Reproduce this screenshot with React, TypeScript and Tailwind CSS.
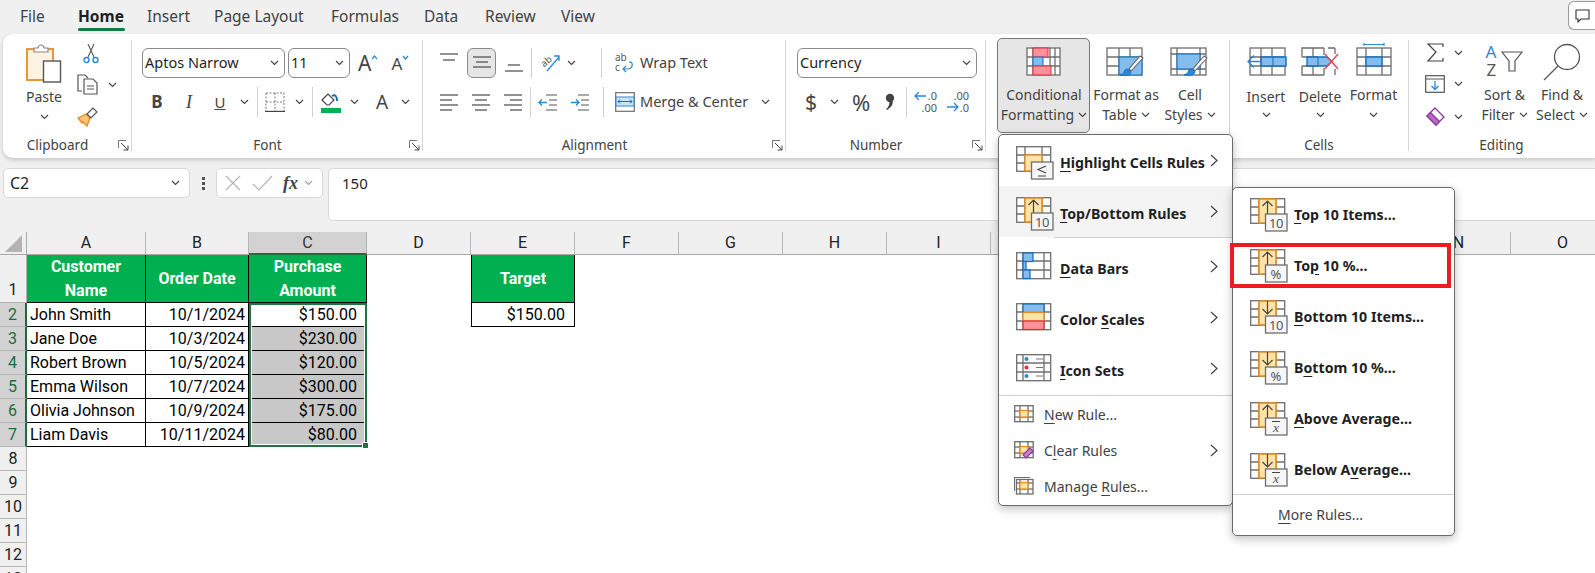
import React from "react";

const UI = "font-['Noto_Sans',sans-serif]";
const GRAY = "#6e6e6e";
const BLUE = "#0f6cbd";
const LBLUE = "#83bdee";

function Chev({ className = "" }: { className?: string }) {
  return (
    <svg width="9" height="6" viewBox="0 0 9 6" className={className}>
      <path d="M1 1l3.5 3.5L8 1" fill="none" stroke="#424242" strokeWidth="1.1" />
    </svg>
  );
}

function Launcher() {
  return (
    <svg width="11" height="11" viewBox="0 0 11 11" className="mr-[2px]">
      <path d="M.5 8V.5H8" fill="none" stroke="#777" />
      <path d="M3 3l7 7M10 5.5V10H5.5" fill="none" stroke="#444" />
    </svg>
  );
}

function Group({ label, launcher, className, children }: { label?: string; launcher?: boolean; className: string; children: React.ReactNode }) {
  return (
    <div className={`flex h-[111px] flex-col border-r border-[#d6d6d6] ${className}`}>
      <div className="h-[99px]">{children}</div>
      <div className="flex h-[12px] items-center text-[13.5px] text-[#424242]">
        <div className="flex-1 text-center">{label}</div>
        {launcher && (
          <div className="flex w-[19px] justify-end">
            <Launcher />
          </div>
        )}
      </div>
    </div>
  );
}

function Large({ icon, a, b, chevInline, className = "", low }: { icon: React.ReactNode; a: string; b?: string; chevInline?: boolean; className?: string; low?: boolean }) {
  return (
    <div className={`flex flex-col items-center text-[14px] leading-[20px] text-[#424242] ${className}`}>
      <div className="flex h-[36px] items-end">{icon}</div>
      <div className={`whitespace-nowrap ${low ? "mt-[11px]" : "mt-[9px]"}`}>{a}</div>
      {b ? (
        <div className="flex items-center gap-[4px] whitespace-nowrap">
          {b}
          {chevInline && <Chev />}
        </div>
      ) : (
        <Chev className={low ? "mt-[5px]" : "mt-[7px]"} />
      )}
    </div>
  );
}

function Select({ value, className }: { value: string; className: string }) {
  return (
    <div className={`flex h-[30px] items-center justify-between rounded-[6px] border border-[#8a8a8a] bg-white pl-[2px] pr-[5px] text-[14.5px] text-[#1f1f1f] ${className}`}>
      <span>{value}</span>
      <Chev />
    </div>
  );
}

function Sep({ className = "" }: { className?: string }) {
  return <div className={`h-[30px] w-px bg-[#d0d0d0] ${className}`} />;
}

function Lines({ rows }: { rows: number[][] }) {
  return (
    <svg width="20" height="20" viewBox="0 0 20 20">
      {rows.map((r, i) => (
        <path key={i} d={`M${r[0]} ${r[2]}H${r[1]}`} stroke="#555" strokeWidth="1.3" />
      ))}
    </svg>
  );
}

const grid = (x: number, y: number, w: number, h: number, xs: number[], ys: number[]) => (
  <g fill="none" stroke={GRAY} strokeWidth="1.3">
    <rect x={x} y={y} width={w} height={h} fill="#fff" />
    {xs.map((v) => (
      <path key={"x" + v} d={`M${v} ${y}V${y + h}`} />
    ))}
    {ys.map((v) => (
      <path key={"y" + v} d={`M${x} ${v}H${x + w}`} />
    ))}
  </g>
);

function PasteIcon() {
  return (
    <svg width="36" height="40" viewBox="0 0 36 40">
      <rect x="1" y="6" width="26" height="31" fill="#fdf3e3" stroke="#e8983a" strokeWidth="2" />
      <path d="M8 9V5h4a3 3 0 016 0h4v4z" fill="#fff" stroke="#888" strokeWidth="1.2" />
      <rect x="17.5" y="18" width="17" height="21" fill="#fff" stroke="#555" strokeWidth="1.4" />
    </svg>
  );
}

function CutIcon() {
  return (
    <svg width="16" height="21" viewBox="0 0 16 21">
      <path d="M5 14L11 1M11 14L5 1" stroke="#555" strokeWidth="1.1" fill="none" />
      <circle cx="3.5" cy="17" r="2.5" fill="none" stroke="#2b88d8" strokeWidth="1.4" />
      <circle cx="12.5" cy="17" r="2.5" fill="none" stroke="#2b88d8" strokeWidth="1.4" />
    </svg>
  );
}

function CopyIcon() {
  return (
    <svg width="22" height="21" viewBox="0 0 22 21">
      <path d="M5 17H1V1h7l3 3" fill="#fff" stroke="#555" strokeWidth="1.2" />
      <path d="M7 5h9l4 4v11H7z" fill="#fff" stroke="#555" strokeWidth="1.2" />
      <path d="M10 12h7M10 15h7" stroke="#555" />
    </svg>
  );
}

function PainterIcon() {
  return (
    <svg width="21" height="20" viewBox="0 0 21 20">
      <path d="M1 11l8-4 4 4-3 8-4-4-1 1z" fill="#f9c27d" stroke="#e8891e" strokeWidth="1.3" />
      <path d="M10 7l6-6 4 4-6 6z" fill="#fff" stroke="#555" strokeWidth="1.2" />
    </svg>
  );
}

function CFIcon() {
  return (
    <svg width="36" height="29" viewBox="0 0 36 29">
      {grid(1, 1, 33, 27, [7, 24, 29], [10, 19])}
      <rect x="7" y="1" width="15" height="9" fill="#ff8f98" stroke="#d13438" />
      <rect x="7" y="10" width="10" height="9" fill={LBLUE} stroke={BLUE} />
      <rect x="7" y="19" width="18" height="9" fill="#ff8f98" stroke="#d13438" />
    </svg>
  );
}

function Brush() {
  return (
    <g>
      <path d="M37 11L25 24l-2-2 11-13z" fill="#fff" stroke="#666" strokeWidth="1.1" />
      <path d="M22 22c-3 0-4 2-4 3s-2 2-4 3c4 1 10 1 11-3z" fill="#2b88d8" stroke={BLUE} strokeWidth=".8" />
    </g>
  );
}

function TableIcon() {
  return (
    <svg width="40" height="31" viewBox="0 0 40 31" className="-mb-[2px]">
      {grid(1, 1, 35, 27, [13, 24], [10, 19])}
      <rect x="13" y="10" width="23" height="18" fill={LBLUE} stroke={BLUE} />
      <Brush />
    </svg>
  );
}

function StylesIcon() {
  return (
    <svg width="40" height="31" viewBox="0 0 40 31" className="-mb-[2px]">
      {grid(1, 1, 35, 27, [7, 30], [7, 22])}
      <rect x="7" y="7" width="23" height="15" fill={LBLUE} stroke={BLUE} />
      <Brush />
    </svg>
  );
}

function InsertIcon() {
  return (
    <svg width="41" height="29" viewBox="0 0 41 29">
      {grid(4, 1, 35, 27, [15, 26], [10, 19])}
      <rect x="15" y="10" width="25" height="9" fill={LBLUE} stroke={BLUE} strokeWidth="1.4" />
      <path d="M27 10v9" stroke={BLUE} />
      <path d="M15 14.5H2M8 8.5l-6 6 6 6" fill="none" stroke="#2b88d8" strokeWidth="1.4" />
    </svg>
  );
}

function DeleteIcon() {
  return (
    <svg width="38" height="29" viewBox="0 0 38 29">
      <path d="M23 1H1v9M1 19v9h22M34 28v-6M34 1v6M27 1h7" fill="none" stroke={GRAY} strokeWidth="1.3" />
      <path d="M1 10h16M1 19h16M12 1v9M12 19v9M23 1v7M23 21v7" stroke={GRAY} strokeWidth="1.3" />
      <path d="M6 10h20l5 4.5-5 4.5H6z" fill={LBLUE} stroke={BLUE} strokeWidth="1.3" />
      <path d="M17 10v9" stroke={BLUE} />
      <path d="M24 7l13 15M37 7L24 22" stroke="#e8484f" strokeWidth="1.4" />
    </svg>
  );
}

function FormatIcon() {
  return (
    <svg width="36" height="33" viewBox="0 0 36 33">
      <path d="M8 1.5h20M8 0v3M28 0v3" stroke="#2b88d8" strokeWidth="1.2" />
      {grid(1, 5, 34, 27, [10, 26], [14, 23])}
      <rect x="10" y="14" width="16" height="9" fill={LBLUE} stroke={BLUE} strokeWidth="1.3" />
    </svg>
  );
}

function SortIcon() {
  return (
    <div className="relative -mb-[3px] h-[36px] w-[38px] text-[17px] leading-[18px]">
      <span className="absolute left-[0px] top-0 text-[#2b88d8]">A</span>
      <span className="absolute left-[1px] top-[18px] text-[#555]">Z</span>
      <svg width="22" height="22" viewBox="0 0 22 22" className="absolute left-[15px] top-[8px]">
        <path d="M1 1h20l-7 9v10H8V10z" fill="#fff" stroke="#555" strokeWidth="1.2" />
      </svg>
    </div>
  );
}

function FindIcon() {
  return (
    <svg width="38" height="38" viewBox="0 0 38 38" className="-mb-[5px]">
      <circle cx="24" cy="14" r="12.5" fill="#fff" stroke="#555" strokeWidth="1.3" />
      <path d="M15 23L1 37" stroke="#555" strokeWidth="1.3" />
    </svg>
  );
}

function FillBucket() {
  return (
    <svg width="22" height="22" viewBox="0 0 22 22">
      <path d="M2 9l6-6 6 6-5 5H7z" fill="#fff" stroke="#444" strokeWidth="1.2" />
      <path d="M12 5c3-2 5 0 5 5" fill="none" stroke="#0f6cbd" strokeWidth="1.8" />
      <rect x="1" y="17" width="20" height="5" fill="#00b050" />
    </svg>
  );
}

function DecimalIcon({ more }: { more?: boolean }) {
  return (
    <svg width="28" height="26" viewBox="0 0 28 26">
      <text x="26" y="11" textAnchor="end" fontSize="11" fill="#555" fontFamily="Noto Sans, sans-serif">
        {more ? ".00" : ".0"}
      </text>
      <text x="26" y="23" textAnchor="end" fontSize="11" fill="#555" fontFamily="Noto Sans, sans-serif">
        {more ? ".0" : ".00"}
      </text>
      {more ? (
        <path d="M4 18h11M11 14l4 4-4 4" fill="none" stroke="#2b88d8" strokeWidth="1.3" />
      ) : (
        <path d="M15 7H4M8 3L4 7l4 4" fill="none" stroke="#2b88d8" strokeWidth="1.3" />
      )}
    </svg>
  );
}

function RuleIcon({ kind, badge }: { kind: "cell" | "up" | "down"; badge: React.ReactNode }) {
  return (
    <svg width="38" height="34" viewBox="0 0 38 34" className="shrink-0">
      {grid(0.7, 0.7, 34, 24.6, [9, 26], [9, 17])}
      {kind === "cell" ? (
        <rect x="9" y="9" width="17" height="16" fill="#fde3a7" stroke="#e58a1f" strokeWidth="1.3" />
      ) : (
        <rect x="9" y="1" width="17" height="24" fill="#fde3a7" stroke="#e58a1f" strokeWidth="1.5" />
      )}
      {kind === "up" && <path d="M17.5 19V3M12.5 8l5-5 5 5" fill="none" stroke="#444" strokeWidth="1.2" />}
      {kind === "down" && <path d="M17.5 1v13M12.5 9l5 5 5-5" fill="none" stroke="#444" strokeWidth="1.2" />}
      <rect x="15.5" y="16" width="21.5" height="17" fill="#f6f6f6" stroke={GRAY} strokeWidth="1.3" />
      {badge}
    </svg>
  );
}

const ten = (
  <text x="26" y="29.5" textAnchor="middle" fontSize="13" fontWeight="400" fill="#555" fontFamily="Noto Sans, sans-serif" letterSpacing="-.5">
    10
  </text>
);
const pct = (
  <text x="26" y="29.5" textAnchor="middle" fontSize="13" fontWeight="400" fill="#555" fontFamily="Noto Sans, sans-serif">
    %
  </text>
);
const lte = <path d="M30 20l-8 3.5 8 3.5M22 30h8" fill="none" stroke="#444" strokeWidth="1.1" />;
const avg = (
  <g>
    <path d="M22 19.5h8" stroke="#444" />
    <text x="26" y="29.5" textAnchor="middle" fontSize="13.5" fontWeight="400" fill="#555" fontStyle="italic" fontFamily="Liberation Serif, serif">
      x
    </text>
  </g>
);

function DataBarsIcon() {
  return (
    <svg width="38" height="34" viewBox="0 0 38 34">
      {grid(0.7, 0.7, 34, 26, [7, 28], [9, 18])}
      <rect x="7" y="1" width="10" height="8.5" fill={LBLUE} stroke={BLUE} strokeWidth="1.2" />
      <rect x="7" y="9.5" width="3" height="8.5" fill={LBLUE} stroke={BLUE} strokeWidth="1.2" />
      <rect x="7" y="18" width="7" height="8.5" fill={LBLUE} stroke={BLUE} strokeWidth="1.2" />
    </svg>
  );
}

function ScalesIcon() {
  return (
    <svg width="38" height="34" viewBox="0 0 38 34">
      {grid(0.7, 0.7, 34, 26, [7, 28], [9, 18])}
      <rect x="7" y="1" width="21" height="8.5" fill={LBLUE} stroke={BLUE} strokeWidth="1.2" />
      <rect x="7" y="9.5" width="21" height="8.5" fill="#fde3a7" stroke="#e58a1f" strokeWidth="1.2" />
      <rect x="7" y="18" width="21" height="8.5" fill="#ff8f98" stroke="#d13438" strokeWidth="1.2" />
    </svg>
  );
}

function IconSetsIcon() {
  return (
    <svg width="38" height="34" viewBox="0 0 38 34">
      {grid(0.7, 0.7, 34, 26, [7, 28], [9, 18])}
      <circle cx="10.5" cy="5" r="2" fill="#2b88d8" />
      <circle cx="10.5" cy="13.5" r="2" fill="#e8303a" />
      <circle cx="10.5" cy="22" r="2" fill="#2b88d8" />
      <path d="M20 5h7M20 13.5h7M20 22h7" stroke="#777" strokeWidth="1.2" />
    </svg>
  );
}

function SmallGrid({ extra, stacked }: { extra?: React.ReactNode; stacked?: boolean }) {
  return (
    <svg width="20" height="18" viewBox="0 0 20 18" className="shrink-0">
      {stacked && <path d="M.5 14V.5H16" fill="none" stroke={GRAY} strokeWidth="1.2" />}
      {grid(stacked ? 2.5 : 0.7, stacked ? 2.5 : 0.7, stacked ? 16.5 : 18.5, stacked ? 14.5 : 16, [6, 14], [6, 12])}
      <rect x="6" y="5.5" width="8" height="6.5" fill="#fde3a7" stroke="#e58a1f" strokeWidth="1.2" />
      {extra}
    </svg>
  );
}

function Arrow() {
  return (
    <svg width="8" height="13" viewBox="0 0 8 13" className="shrink-0">
      <path d="M1 1l6 5.5L1 12" fill="none" stroke="#424242" strokeWidth="1.2" />
    </svg>
  );
}

function U({ children }: { children: React.ReactNode }) {
  return <span className="underline underline-offset-[3px]">{children}</span>;
}

function MenuRow({ icon, children, arrow, className = "", shift = "", arrowShift = "" }: { icon: React.ReactNode; children: React.ReactNode; arrow?: boolean; className?: string; shift?: string; arrowShift?: string }) {
  return (
    <div className={`flex h-[51px] items-center pl-[17px] text-[14.2px] font-bold text-[#1f1f1f] ${className}`}>
      <div className={`w-[44px] ${shift}`}>{icon}</div>
      <div className={`whitespace-nowrap ${shift}`}>{children}</div>
      {arrow && (
        <div className={`ml-auto mr-[14px] ${arrowShift}`}>
          <Arrow />
        </div>
      )}
    </div>
  );
}

function PlainRow({ icon, children, arrow }: { icon: React.ReactNode; children: React.ReactNode; arrow?: boolean }) {
  return (
    <div className="flex h-[36px] items-center pl-[15px] text-[14px] text-[#424242]">
      <div className="w-[30px]">{icon}</div>
      <div className="whitespace-nowrap">{children}</div>
      {arrow && (
        <div className="ml-auto mr-[14px]">
          <Arrow />
        </div>
      )}
    </div>
  );
}

const cols = ["A", "B", "C", "D", "E", "F", "G", "H", "I", "J", "K", "L", "M", "N", "O"];
const rows = [
  ["John Smith", "10/1/2024", "$150.00"],
  ["Jane Doe", "10/3/2024", "$230.00"],
  ["Robert Brown", "10/5/2024", "$120.00"],
  ["Emma Wilson", "10/7/2024", "$300.00"],
  ["Olivia Johnson", "10/9/2024", "$175.00"],
  ["Liam Davis", "10/11/2024", "$80.00"],
];

function Sheet() {
  const green = "flex items-center justify-center border-b border-r border-black bg-[#00b050] text-center font-bold leading-[24px] text-white";
  return (
    <div className="relative grid shrink-0 grid-cols-[27px_119px_103px_118px_104px_104px_repeat(10,104px)] grid-rows-[23px_48px_repeat(12,24px)] whitespace-nowrap bg-white font-['Roboto',sans-serif] text-[16px] text-black">
      <div className="flex items-end justify-end border-r border-b border-[#a8a8a8] bg-[#f0f0f0] pb-[2px] pr-[4px]">
        <div className="h-0 w-0 border-b-[17px] border-l-[17px] border-b-[#b4b4b4] border-l-transparent" />
      </div>
      {cols.map((c) => (
        <div
          key={c}
          className={
            c === "C"
              ? "flex items-center justify-center border-b-2 border-r border-[#1e6b41] border-r-[#b0b0b0] bg-[#d2d2d2] text-[#333]"
              : "flex items-center justify-center border-b border-r border-[#b8b8b8] border-b-[#a8a8a8] bg-[#f0f0f0] text-[#222]"
          }
        >
          {c}
        </div>
      ))}

      <div className="flex items-end justify-center border-b border-r border-[#b0b0b0] bg-[#f0f0f0] text-[#222]">1</div>
      <div className={green}>
        Customer
        <br />
        Name
      </div>
      <div className={green}>Order Date</div>
      <div className={green}>
        Purchase
        <br />
        Amount
      </div>
      <div />
      <div className={`${green} border-l`}>Target</div>
      <div className="col-span-10" />

      {rows.map((r, i) => (
        <React.Fragment key={r[0]}>
          <div className="flex items-center justify-center border-b border-r-2 border-[#b8b8b8] border-r-[#1e6b41] bg-[#d2d2d2] text-[#1e6b41]">{i + 2}</div>
          <div className="flex items-center border-b border-r border-black pl-[3px]">{r[0]}</div>
          <div className="flex items-center justify-end border-b border-r border-black pr-[3px]">{r[1]}</div>
          <div className={`flex items-center justify-end border-b border-r border-black pr-[9px] ${i === 0 ? "bg-white" : "bg-[#c8c8c8]"}`}>{r[2]}</div>
          <div />
          {i === 0 ? <div className="flex items-center justify-end border-b border-r border-l border-black pr-[9px]">$150.00</div> : <div />}
          <div className="col-span-10" />
        </React.Fragment>
      ))}
      {[8, 9, 10, 11, 12, 13].map((n) => (
        <React.Fragment key={n}>
          <div className="flex items-center justify-center border-b border-r border-[#b8b8b8] bg-[#f0f0f0] text-[#222]">{n}</div>
          <div className="col-span-15" />
        </React.Fragment>
      ))}

      {/* selected range C2:C7 */}
      <div className="pointer-events-none absolute inset-0 col-start-4 col-end-5 row-start-3 row-end-9 border-2 border-[#217346] shadow-[inset_0_0_0_1px_#fff]">
        <div className="absolute -bottom-[4px] -right-[4px] h-[7px] w-[7px] border border-white bg-[#217346]" />
      </div>
    </div>
  );
}

function CFMenu() {
  return (
    <div className="absolute left-[998px] top-[134px] z-20 h-[372px] w-[235px] rounded-[5px] border border-[#6a6a6a] bg-white shadow-[0_3px_10px_rgba(0,0,0,0.25)]">
      <MenuRow icon={<RuleIcon kind="cell" badge={lte} />} arrow shift="pt-[5px]">
        <U>H</U>ighlight Cells Rules
      </MenuRow>
      <MenuRow icon={<RuleIcon kind="up" badge={ten} />} arrow shift="pt-[5px]" className="bg-[#f3f3f3]">
        <U>T</U>op/Bottom Rules
      </MenuRow>
      <div className="ml-[55px] h-px bg-[#d0d0d0]" />
      <MenuRow icon={<DataBarsIcon />} arrow shift="pt-[11px]" arrowShift="pt-[5px]">
        <U>D</U>ata Bars
      </MenuRow>
      <MenuRow icon={<ScalesIcon />} arrow shift="pt-[11px]" arrowShift="pt-[5px]">
        Color <U>S</U>cales
      </MenuRow>
      <MenuRow icon={<IconSetsIcon />} arrow shift="pt-[11px]" arrowShift="pt-[5px]">
        <U>I</U>con Sets
      </MenuRow>
      <div className="mt-[4px] h-px bg-[#d0d0d0]" />
      <PlainRow icon={<SmallGrid />}>
        <U>N</U>ew Rule...
      </PlainRow>
      <PlainRow
        arrow
        icon={
          <SmallGrid
            extra={<path d="M9 14l7-7 3 3-7 7z" fill="#c77fd0" stroke="#8e3a9d" strokeWidth="1.2" />}
          />
        }
      >
        C<U>l</U>ear Rules
      </PlainRow>
      <PlainRow icon={<SmallGrid stacked />}>
        Manage <U>R</U>ules...
      </PlainRow>
    </div>
  );
}

function TopMenu() {
  return (
    <div className="absolute left-[1232px] top-[187px] z-30 h-[349px] w-[223px] rounded-[5px] border border-[#6a6a6a] bg-white shadow-[0_3px_10px_rgba(0,0,0,0.25)]">
      <MenuRow icon={<RuleIcon kind="up" badge={ten} />} shift="pt-[2px]">
        <U>T</U>op 10 Items...
      </MenuRow>
      <MenuRow icon={<RuleIcon kind="up" badge={pct} />} shift="pt-[2px]">
        To<U>p</U> 10 %...
      </MenuRow>
      <MenuRow icon={<RuleIcon kind="down" badge={ten} />} shift="pt-[2px]">
        <U>B</U>ottom 10 Items...
      </MenuRow>
      <MenuRow icon={<RuleIcon kind="down" badge={pct} />} shift="pt-[2px]">
        B<U>o</U>ttom 10 %...
      </MenuRow>
      <MenuRow icon={<RuleIcon kind="up" badge={avg} />} shift="pt-[2px]">
        <U>A</U>bove Average...
      </MenuRow>
      <MenuRow icon={<RuleIcon kind="down" badge={avg} />} shift="pt-[2px]">
        Below A<U>v</U>erage...
      </MenuRow>
      <div className="h-px bg-[#d0d0d0]" />
      <div className="flex h-[38px] items-center pl-[45px] text-[14px] text-[#424242]">
        <span>
          <U>M</U>ore Rules...
        </span>
      </div>
      {/* red callout on Top 10 % */}
      <div className="absolute left-[-3px] top-[55px] h-[45px] w-[221px] border-[4px] border-[#ed1c24]" />
    </div>
  );
}

export default function App() {
  return (
    <div className={`relative flex h-[573px] w-[1595px] flex-col overflow-hidden bg-[#f0f0f0] ${UI}`}>
      {/* tabs */}
      <div className="flex h-[34px] shrink-0 text-[15.5px] text-[#424242]">
        <div className="w-[78px] pl-[20px] pt-[5px]">File</div>
        <div className="flex w-[69px] flex-col pt-[5px]">
          <span className="font-bold text-[#1f1f1f]">Home</span>
          <div className="h-[3px] w-[47px] rounded-sm bg-[#107c41]" />
        </div>
        <div className="w-[67px] pt-[5px]">Insert</div>
        <div className="w-[117px] pt-[5px]">Page Layout</div>
        <div className="w-[93px] pt-[5px]">Formulas</div>
        <div className="w-[61px] pt-[5px]">Data</div>
        <div className="w-[76px] pt-[5px]">Review</div>
        <div className="pt-[5px]">View</div>
        <div className="ml-auto mt-[1px] flex h-[29px] w-[27px] items-center justify-center rounded-l-[6px] border border-r-0 border-[#9a9a9a] bg-white">
          <svg width="15" height="14" viewBox="0 0 15 14">
            <path d="M1 1h13v9H6l-3 3v-3H1z" fill="none" stroke="#333" strokeWidth="1.1" />
          </svg>
        </div>
      </div>

      {/* ribbon */}
      <div className="ml-[3px] flex h-[124px] shrink-0 rounded-l-[10px] bg-white pt-[6px] shadow-[0_2px_4px_rgba(0,0,0,0.18)]">
        <Group label="Clipboard" launcher className="w-[129px]">
          <div className="flex">
            <div className="ml-[19px] flex w-[44px] flex-col items-center text-[14px] leading-[20px] text-[#424242]">
              <div className="mt-[3px]">
                <PasteIcon />
              </div>
              <div className="mt-[4px]">Paste</div>
              <Chev className="mt-[7px]" />
            </div>
            <div className="ml-[11px] flex flex-col">
              <div className="ml-[6px] mt-[3px]">
                <CutIcon />
              </div>
              <div className="mt-[10px] flex items-center gap-[9px]">
                <CopyIcon />
                <Chev />
              </div>
              <div className="mt-[12px]">
                <PainterIcon />
              </div>
            </div>
          </div>
        </Group>

        <Group label="Font" launcher className="w-[291px]">
          <div className="ml-[10px] mt-[8px] flex items-center">
            <Select value="Aptos Narrow" className="w-[143px]" />
            <Select value="11" className="ml-[3px] w-[62px]" />
            <span className="ml-[8px] text-[21px] leading-none text-[#444]">A</span>
            <svg width="7" height="5" viewBox="0 0 7 5" className="mb-[12px]">
              <path d="M1 4l2.5-3L6 4" fill="none" stroke="#2b88d8" strokeWidth="1.2" />
            </svg>
            <span className="ml-[13px] text-[17px] leading-none text-[#444]">A</span>
            <svg width="7" height="5" viewBox="0 0 7 5" className="mb-[12px]">
              <path d="M1 1l2.5 3L6 1" fill="none" stroke="#2b88d8" strokeWidth="1.4" />
            </svg>
          </div>
          <div className="ml-[9px] mt-[9px] flex h-[30px] items-center text-[#444]">
            <span className="w-[32px] text-center text-[17px] font-bold">B</span>
            <span className="w-[32px] text-center font-['Liberation_Serif',serif] text-[18px] italic">I</span>
            <span className="w-[30px] text-center text-[15px] underline">U</span>
            <Chev className="ml-[5px]" />
            <Sep className="ml-[8px]" />
            <svg width="20" height="20" viewBox="0 0 20 20" className="ml-[7px]">
              <path d="M1 1h18v18M1 1v18M10 1v18M1 10h18" fill="none" stroke="#777" strokeDasharray="2 1.5" />
              <path d="M0 19.5h20" stroke="#444" strokeWidth="1.4" />
            </svg>
            <Chev className="ml-[10px]" />
            <Sep className="ml-[8px]" />
            <div className="ml-[7px]">
              <FillBucket />
            </div>
            <Chev className="ml-[8px]" />
            <span className="ml-[17px] text-[19px] leading-none">A</span>
            <Chev className="ml-[13px]" />
          </div>
        </Group>

        <Group label="Alignment" launcher className="w-[363px]">
          <div className="ml-[16px] mt-[8px] flex h-[30px] items-center">
            <Lines rows={[[1, 19, 1], [4, 16, 7]]} />
            <div className="ml-[8px] flex h-[30px] w-[29px] items-center justify-center rounded-[6px] border border-[#8a8a8a] bg-[#e6e6e6]">
              <Lines rows={[[1, 19, 4], [4, 16, 9], [1, 19, 14]]} />
            </div>
            <div className="ml-[8px]">
              <Lines rows={[[4, 16, 12], [1, 19, 18]]} />
            </div>
            <Sep className="ml-[7px]" />
            <svg width="24" height="24" viewBox="0 0 24 24" className="ml-[6px]">
              <text x="3" y="14" fontSize="9.5" fill="#555" transform="rotate(-40 8 11)" fontFamily="Noto Sans, sans-serif">
                ab
              </text>
              <path d="M9 20L21 6M16 5h5v5" fill="none" stroke="#2b88d8" strokeWidth="1.3" />
            </svg>
            <Chev className="ml-[5px]" />
            <Sep className="ml-[25px]" />
            <svg width="20" height="24" viewBox="0 0 20 24" className="ml-[13px]">
              <text x="0" y="10" fontSize="10" fill="#555" fontFamily="Noto Sans, sans-serif">
                ab
              </text>
              <text x="0" y="20" fontSize="10" fill="#555" fontFamily="Noto Sans, sans-serif">
                c
              </text>
              <path d="M14 11c4-1 5 6-1 7H8M11 15l-3 3 3 3" fill="none" stroke="#2b88d8" strokeWidth="1.2" />
            </svg>
            <span className="ml-[5px] whitespace-nowrap text-[14.5px] text-[#424242]">Wrap Text</span>
          </div>
          <div className="ml-[16px] mt-[9px] flex h-[30px] items-center">
            <Lines rows={[[1, 19, 3], [1, 13, 8], [1, 19, 13], [1, 13, 18]]} />
            <div className="ml-[12px]">
              <Lines rows={[[1, 19, 3], [4, 16, 8], [1, 19, 13], [4, 16, 18]]} />
            </div>
            <div className="ml-[12px]">
              <Lines rows={[[1, 19, 3], [7, 19, 8], [1, 19, 13], [7, 19, 18]]} />
            </div>
            <Sep className="ml-[7px]" />
            <svg width="20" height="20" viewBox="0 0 20 20" className="ml-[7px]">
              <path d="M8 3h11M11 8h8M11 13h8M8 18h11" stroke="#555" strokeWidth="1.2" />
              <path d="M9 10.5H1M4 7.5l-3 3 3 3" fill="none" stroke="#2b88d8" strokeWidth="1.3" />
            </svg>
            <svg width="20" height="20" viewBox="0 0 20 20" className="ml-[12px]">
              <path d="M8 3h11M11 8h8M11 13h8M8 18h11" stroke="#555" strokeWidth="1.2" />
              <path d="M1 10.5h8M6 7.5l3 3-3 3" fill="none" stroke="#2b88d8" strokeWidth="1.3" />
            </svg>
            <Sep className="ml-[13px]" />
            <svg width="20" height="20" viewBox="0 0 20 20" className="ml-[11px]">
              <rect x=".7" y=".7" width="18.6" height="18.6" fill="#fff" stroke={GRAY} strokeWidth="1.2" />
              <rect x="1" y="5" width="18" height="9" fill="#cde4f7" stroke="#2b88d8" />
              <path d="M3 9.5h14M5 7.5l-2 2 2 2M15 7.5l2 2-2 2" fill="none" stroke={BLUE} />
            </svg>
            <span className="ml-[5px] whitespace-nowrap text-[14.5px] text-[#424242]">Merge &amp; Center</span>
            <Chev className="ml-[13px]" />
          </div>
        </Group>

        <Group label="Number" launcher className="w-[200px]">
          <div className="ml-[11px] mt-[8px]">
            <Select value="Currency" className="w-[180px]" />
          </div>
          <div className="ml-[18px] mt-[9px] flex h-[30px] items-center text-[#444]">
            <span className="w-[14px] text-center text-[21px] leading-none">$</span>
            <Chev className="ml-[12px]" />
            <span className="ml-[13px] text-[22px] leading-none">%</span>
            <svg width="10" height="18" viewBox="0 0 10 18" className="ml-[15px]">
              <circle cx="5" cy="5" r="4.2" fill="#444" />
              <path d="M7 6c2 4 0 8-5 11l-1-1c3-2 4-6 3-9z" fill="#444" />
            </svg>
            <Sep className="ml-[11px]" />
            <div className="ml-[4px]">
              <DecimalIcon />
            </div>
            <div className="ml-[4px]">
              <DecimalIcon more />
            </div>
          </div>
        </Group>

        <Group className="w-[244px]">
          <div className="flex">
            <div className="-mt-[2px] ml-[11px] h-[95px] w-[93px] rounded-[5px] border border-[#777] bg-[#e6e6e6] pt-px">
              <Large icon={<CFIcon />} a="Conditional" b="Formatting" chevInline className="-mr-px" />
            </div>
            <Large icon={<TableIcon />} a="Format as" b="Table" chevInline className="w-[72px]" />
            <Large icon={<StylesIcon />} a="Cell" b="Styles" chevInline className="w-[56px]" />
          </div>
        </Group>

        <Group label="Cells" className="w-[179px]">
          <div className="flex pl-[9px]">
            <Large icon={<InsertIcon />} a="Insert" low className="w-[54px]" />
            <Large icon={<DeleteIcon />} a="Delete" low className="w-[54px]" />
            <Large icon={<FormatIcon />} a="Format" className="w-[53px]" />
          </div>
        </Group>

        <div className="flex h-[111px] w-[185px] flex-col">
          <div className="flex h-[99px]">
            <div className="ml-[16px] flex w-[46px] flex-col pt-[3px]">
              <div className="flex items-center gap-[9px]">
                <svg width="20" height="19" viewBox="0 0 20 19">
                  <path d="M18 4V1H3l8 8-8 9h15v-3" fill="none" stroke="#444" strokeWidth="1.2" />
                </svg>
                <Chev />
              </div>
              <div className="mt-[13px] flex items-center gap-[9px]">
                <svg width="20" height="18" viewBox="0 0 20 18">
                  <rect x=".7" y=".7" width="18.6" height="16.6" fill="#fff" stroke="#555" strokeWidth="1.2" />
                  <path d="M1 4h18" stroke="#555" />
                  <path d="M10 6v8M6.5 11l3.5 3.5 3.5-3.5" fill="none" stroke="#2b88d8" strokeWidth="1.3" />
                </svg>
                <Chev />
              </div>
              <div className="mt-[14px] flex items-center gap-[9px]">
                <svg width="20" height="20" viewBox="0 0 20 20">
                  <path d="M10 1l9 9-8 8-9-9z" fill="#fff" stroke="#8e3a9d" strokeWidth="1.3" />
                  <path d="M5.5 5.5l9 9-3.5 3.5-9-9z" fill="#b46cc4" stroke="#8e3a9d" strokeWidth="1.3" />
                </svg>
                <Chev />
              </div>
            </div>
            <Large icon={<SortIcon />} a="Sort &" b="Filter" chevInline className="ml-[6px] w-[55px]" />
            <Large icon={<FindIcon />} a="Find &" b="Select" chevInline className="ml-[3px] w-[54px]" />
          </div>
          <div className="flex h-[12px] items-center justify-center text-[13.5px] text-[#424242]">Editing</div>
        </div>
      </div>

      {/* formula bar */}
      <div className="flex h-[74px] shrink-0 items-start pl-[3px] pt-[10px]">
        <div className="flex h-[30px] w-[187px] items-center justify-between rounded-[5px] border border-[#d8d8d8] bg-white pl-[6px] pr-[9px] text-[16px] text-[#1f1f1f]">
          C2
          <Chev />
        </div>
        <div className="flex h-[30px] w-[26px] flex-col items-center justify-center gap-[2px]">
          <div className="h-[3px] w-[3px] bg-[#555]" />
          <div className="h-[3px] w-[3px] bg-[#555]" />
          <div className="h-[3px] w-[3px] bg-[#555]" />
        </div>
        <div className="flex h-[30px] w-[107px] items-center rounded-[5px] border border-[#d8d8d8] bg-white pl-[8px]">
          <svg width="16" height="16" viewBox="0 0 16 16">
            <path d="M1 1l14 14M15 1L1 15" stroke="#b5b5b5" strokeWidth="1.2" />
          </svg>
          <svg width="21" height="16" viewBox="0 0 21 16" className="ml-[11px]">
            <path d="M1 9l6 6L20 1" fill="none" stroke="#b5b5b5" strokeWidth="1.2" />
          </svg>
          <span className="ml-[10px] font-['Liberation_Serif',serif] text-[18px] font-bold italic text-[#444]">fx</span>
          <Chev className="ml-[6px] opacity-50" />
        </div>
        <div className="ml-[5px] h-[53px] flex-1 rounded-l-[5px] border border-r-0 border-[#d8d8d8] bg-white pl-[13px] pt-[3px] text-[15px] text-[#1f1f1f]">150</div>
      </div>

      <Sheet />
      <CFMenu />
      <TopMenu />
    </div>
  );
}
